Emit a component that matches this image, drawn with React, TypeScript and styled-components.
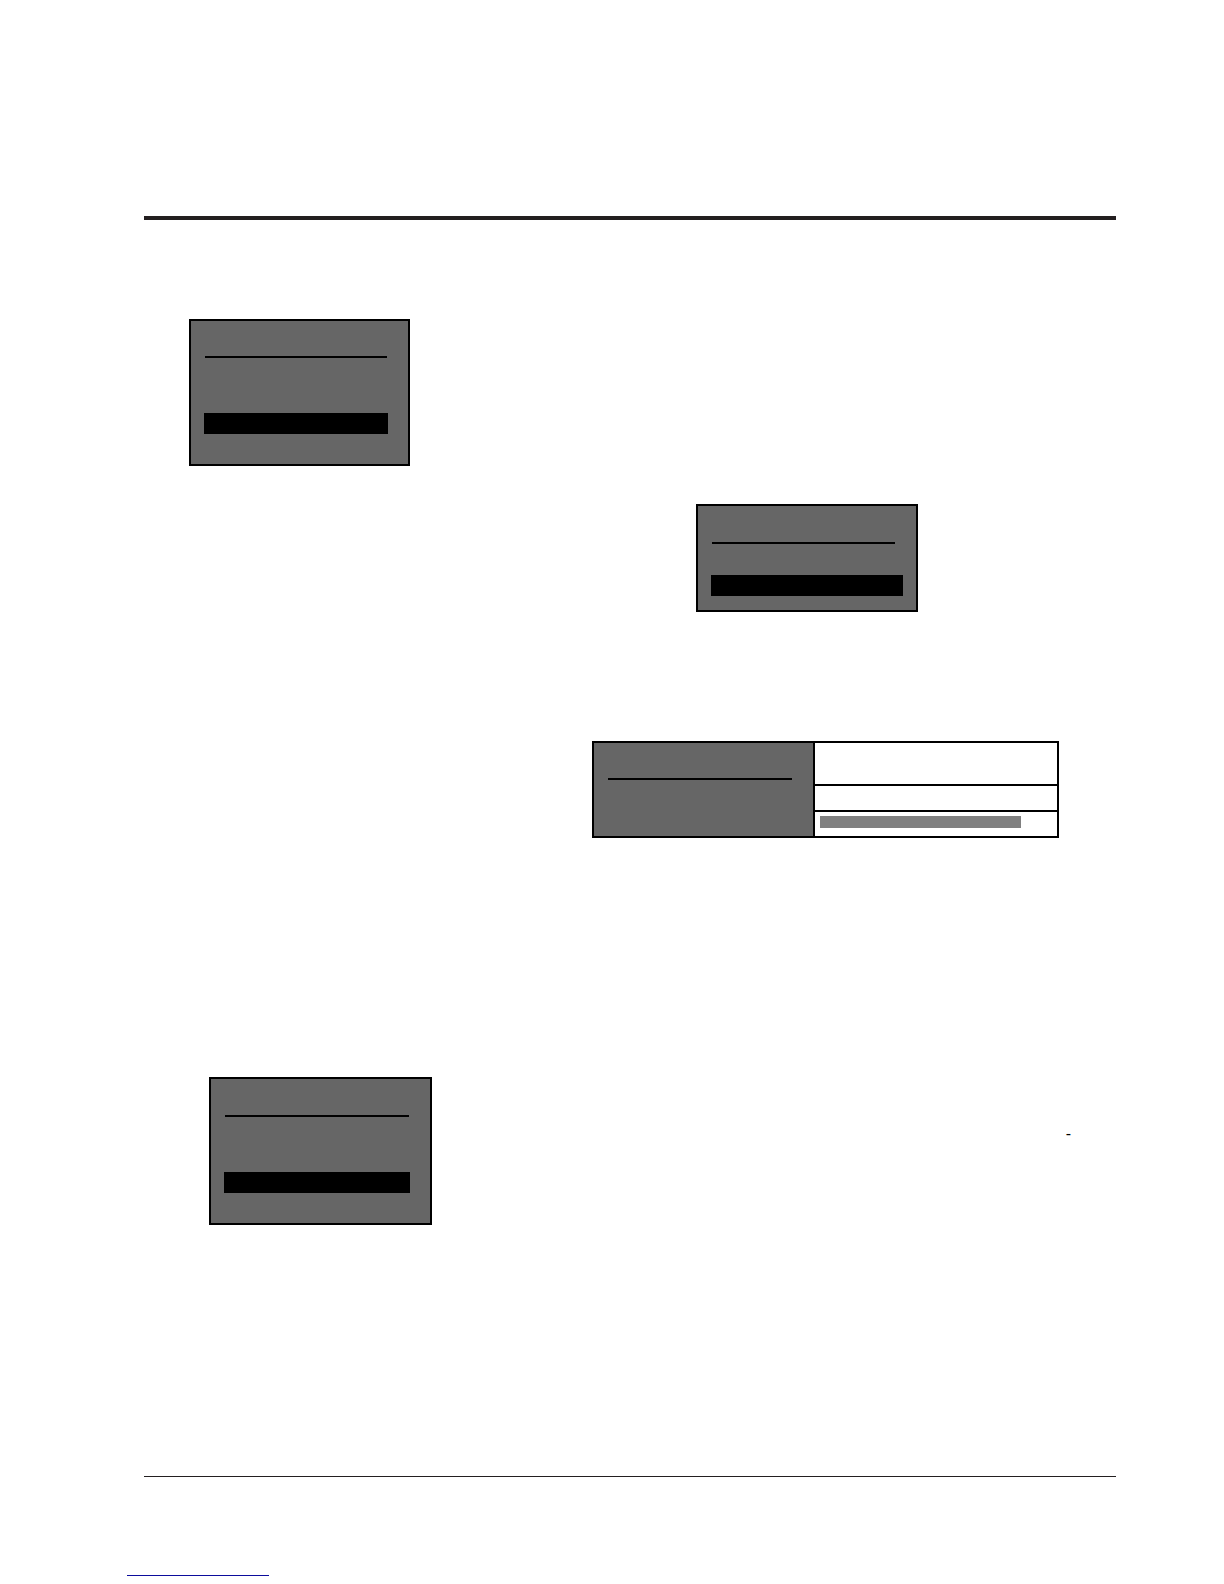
import React from "react";
import styled, { createGlobalStyle } from "styled-components";

const GlobalStyle = createGlobalStyle`
  * { box-sizing: border-box; }
  body {
    margin: 0;
    background: #ffffff;
    color: #000000;
    font-family: "Liberation Sans", Arial, sans-serif;
    font-size: 16px;
    line-height: 20px;
  }
`;

const Page = styled.div`
  display: flex;
  flex-direction: column;
  padding: 216px 0 8px;
`;

const Rule = styled.hr<{ $weight: number }>`
  height: ${(p) => p.$weight}px;
  margin: 0 108px 0 144px;
  border: 0;
  background: #231f20;
`;

const Content = styled.main`
  display: flex;
  flex-direction: column;
  margin: 0 108px 0 144px;
  padding: 99px 0 251px;
`;

const Row = styled.section<{
  $align?: string;
  $above?: number;
  $left?: number;
  $right?: number;
}>`
  display: flex;
  align-items: flex-start;
  justify-content: ${(p) => p.$align ?? "flex-start"};
  margin-top: ${(p) => p.$above ?? 0}px;
  padding-left: ${(p) => p.$left ?? 0}px;
  padding-right: ${(p) => p.$right ?? 0}px;
`;

const Screen = styled.div<{ $width: number; $top: number; $bottom: number }>`
  display: flex;
  flex-direction: column;
  width: ${(p) => p.$width}px;
  padding: ${(p) => p.$top}px 0 ${(p) => p.$bottom}px;
  border: 2px solid #000000;
  background: #666666;
`;

const TitleLine = styled.div`
  height: 2px;
  margin: 0 21px 0 14px;
  background: #000000;
`;

const Selection = styled.div<{ $gap: number; $right: number }>`
  height: 21px;
  margin: ${(p) => p.$gap}px ${(p) => p.$right}px 0 13px;
  background: #000000;
`;

const Display = styled.div`
  display: grid;
  grid-template-columns: 219px 242px;
  gap: 2px;
  border: 2px solid #000000;
  background: #000000;
`;

const DisplayMenu = styled.div`
  padding-top: 35px;
  background: #666666;
`;

const Readouts = styled.div`
  display: grid;
  grid-template-rows: 41px 24px 24px;
  gap: 2px;
`;

const Readout = styled.div`
  padding: 4px 36px 0 5px;
  background: #ffffff;
`;

const Level = styled.div`
  height: 12px;
  background: #808080;
`;

const Note = styled.p`
  margin: 0;
  padding-top: 47px;
`;

const Footer = styled.footer`
  display: flex;
  padding: 98px 0 0 127px;
`;

const FooterLink = styled.a`
  width: 142px;
  height: 1px;
  background: #0c0c9c;
`;

function MenuScreen(props: {
  width: number;
  top: number;
  gap: number;
  right: number;
  bottom: number;
}) {
  return (
    <Screen $width={props.width} $top={props.top} $bottom={props.bottom}>
      <TitleLine />
      <Selection $gap={props.gap} $right={props.right} />
    </Screen>
  );
}

export default function App() {
  return (
    <>
      <GlobalStyle />
      <Page>
        <Rule $weight={4} />
        <Content>
          <Row $left={45}>
            <MenuScreen width={221} top={35} gap={55} right={20} bottom={30} />
          </Row>
          <Row $align="flex-end" $above={38} $right={198}>
            <MenuScreen width={222} top={36} gap={31} right={13} bottom={14} />
          </Row>
          <Row $align="flex-end" $above={129} $right={57}>
            <Display>
              <DisplayMenu>
                <TitleLine />
              </DisplayMenu>
              <Readouts>
                <Readout />
                <Readout />
                <Readout>
                  <Level />
                </Readout>
              </Readouts>
            </Display>
          </Row>
          <Row $align="space-between" $above={239} $left={65} $right={45}>
            <MenuScreen width={223} top={36} gap={55} right={20} bottom={30} />
            <Note>-</Note>
          </Row>
        </Content>
        <Rule $weight={1} />
        <Footer>
          <FooterLink href="#" />
        </Footer>
      </Page>
    </>
  );
}
